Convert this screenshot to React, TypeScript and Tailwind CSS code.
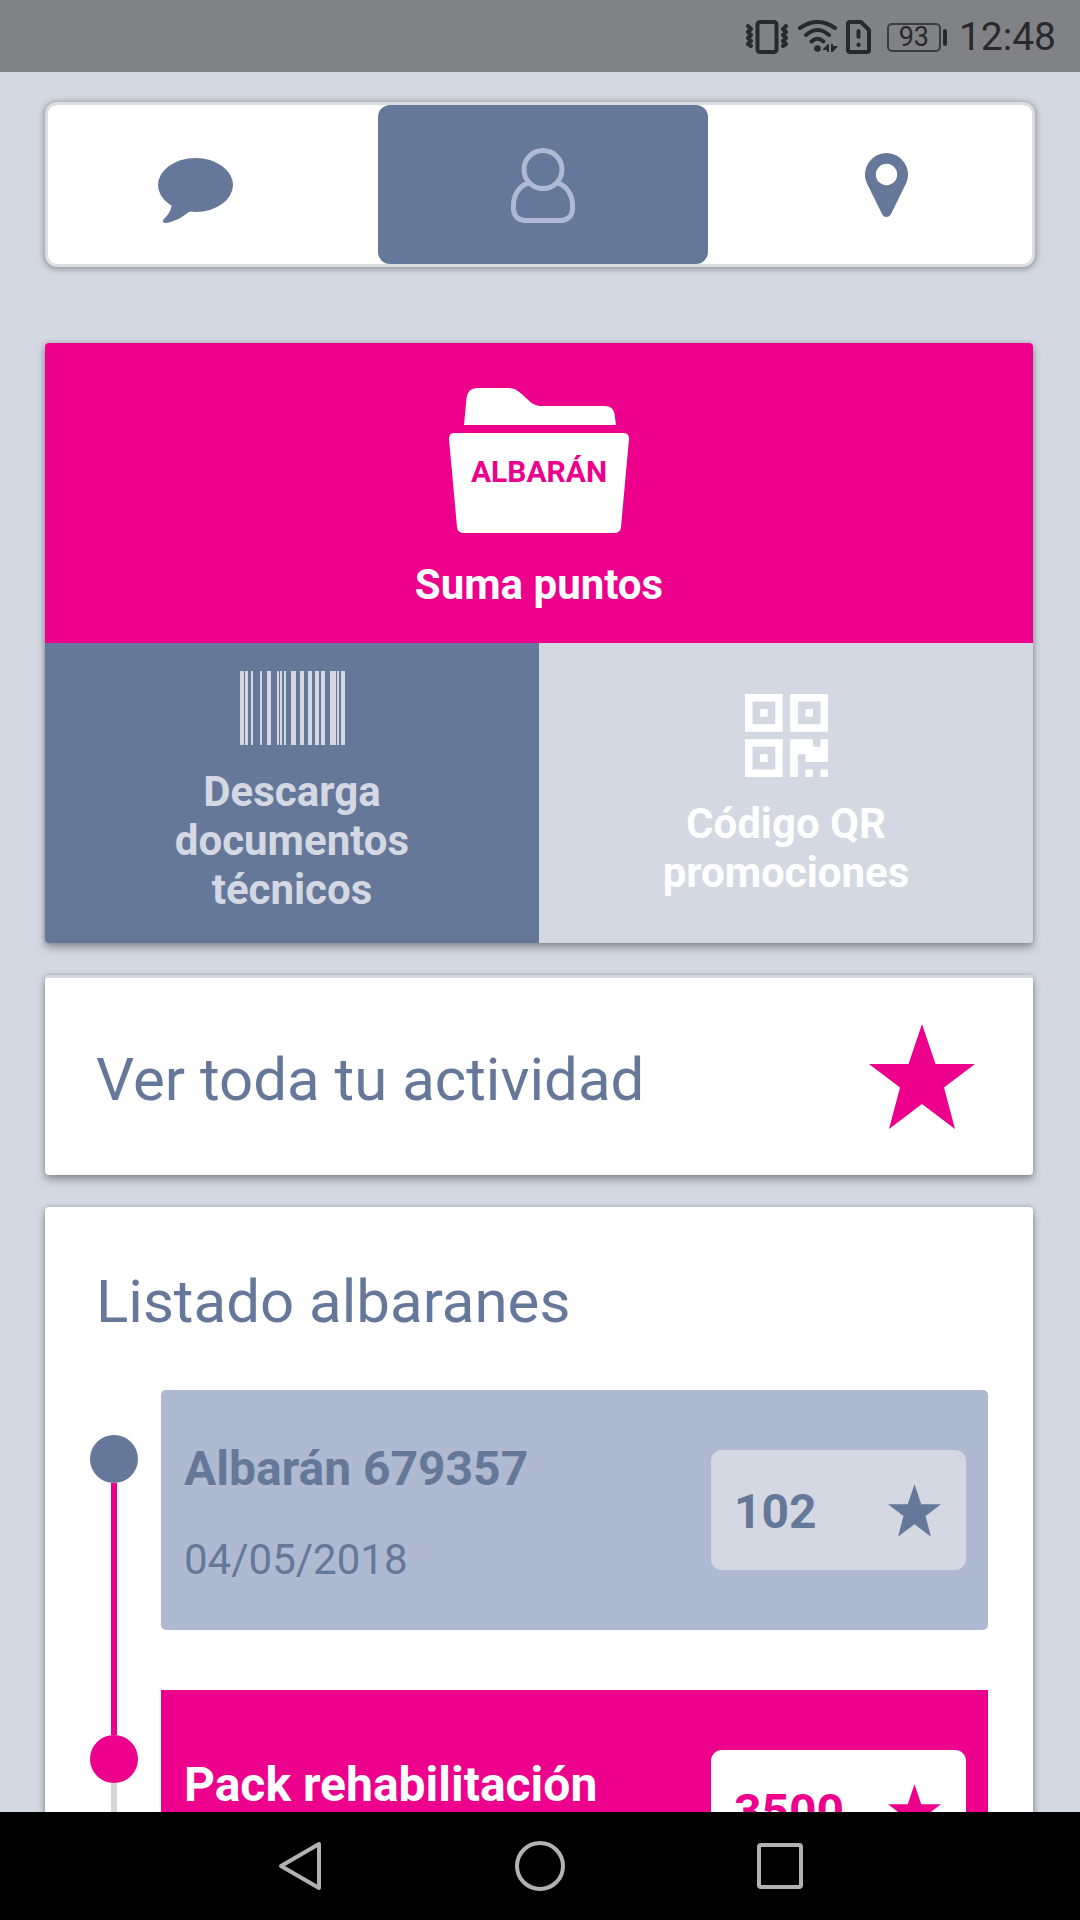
import type { ReactNode } from 'react'
import { clsx } from 'clsx'

const CARD = 'mr-0.5 rounded-[4px] shadow-[0_5px_8px_0_rgba(0,0,0,0.3),0_0_4px_1px_rgba(0,0,0,0.14)]'

const BARS = [
  [0, 4], [5, 3], [11, 2], [20, 2], [27, 4], [37, 2], [40, 2], [44, 2],
  [51, 5], [60, 4], [68, 4], [75, 4], [81, 4], [90, 6], [97, 2], [101, 4],
]

interface Albaran {
  title: string
  date?: string
  points: number
  highlighted?: boolean
}

const albaranes: Albaran[] = [
  { title: 'Albarán 679357', date: '04/05/2018', points: 102 },
  { title: 'Pack rehabilitación', points: 3500, highlighted: true },
]

function Star({ className }: { className: string }) {
  return (
    <svg viewBox="0 0 106 105" fill="currentColor" className={className} aria-hidden="true">
      <path d="M53 0 66.500 40H106L75 63.500 86 105 53 80 20 105 31 63.500 0 40H39.500Z" />
    </svg>
  )
}

function ChatIcon() {
  return (
    <svg viewBox="0 0 75 65" fill="currentColor" className="h-[65px] w-[75px]" aria-hidden="true">
      <ellipse cx="37.500" cy="27" rx="37.500" ry="27" />
      <path d="M14 46C13 53 10 57 6 61 4 63 5 65 8 65 16 64 25 59 32 53Z" />
    </svg>
  )
}

function PersonIcon() {
  return (
    <svg viewBox="0 0 64 75" fill="none" stroke="currentColor" strokeWidth="5" className="h-[75px] w-16" aria-hidden="true">
      <circle cx="32" cy="21.500" r="19" />
      <path d="M18 35C8 37 2.500 48 2.500 57V61C2.500 68 8 72.500 14 72.500H50C56 72.500 61.500 68 61.500 61V57C61.500 48 56 37 46 35" />
    </svg>
  )
}

function PinIcon() {
  return (
    <svg viewBox="0 0 43 64" fill="currentColor" className="h-16 w-[43px]" aria-hidden="true">
      <path
        fillRule="evenodd"
        d="M21.500 0A21.500 21.500 0 0 0 1.500 29.500L17 61Q18.500 64 21.500 64T26 61L41.500 29.500A21.500 21.500 0 0 0 21.500 0ZM21.500 10.800A10.700 10.700 0 1 1 21.500 32.200 10.700 10.700 0 0 1 21.500 10.800Z"
      />
    </svg>
  )
}

function FolderIcon() {
  return (
    <svg viewBox="0 0 180 145" fill="currentColor" className="h-[145px] w-[180px]" aria-hidden="true">
      <path d="M15 37 17.500 10Q19 0 28 0H59C67 0 72 5 77 10 83 16 87 18 93 18H156Q164 18 165.500 26L167 37Z" />
      <path d="M5 45H175Q180 45 180 51L172 139Q171.500 145 165 145H15Q8.500 145 8 139L0 51Q0 45 5 45Z" />
    </svg>
  )
}

function BarcodeIcon() {
  return (
    <svg viewBox="0 0 105 74" fill="currentColor" className="h-[74px] w-[105px]" aria-hidden="true">
      {BARS.map(([x, w]) => (
        <rect key={x} x={x} y="0" width={w} height="74" />
      ))}
    </svg>
  )
}

function QrIcon() {
  return (
    <svg viewBox="0 0 11 11" fill="currentColor" className="size-[83px]" aria-hidden="true">
      <path
        fillRule="evenodd"
        d="M0 0H5V5H0ZM1 1V4H4V1ZM2 2H3V3H2ZM6 0H11V5H6ZM7 1V4H10V1ZM8 2H9V3H8ZM0 6H5V11H0ZM1 7V10H4V7ZM2 8H3V9H2Z"
      />
      <path d="M6 6H9V7H10V6H11V9H8V8H7V11H6ZM8 10H9V11H8ZM10 10H11V11H10Z" />
    </svg>
  )
}

function StatusBar() {
  return (
    <header className="flex h-[72px] shrink-0 items-center justify-end bg-[#818286] pt-0.5 pr-6 text-[#28292c]">
      <svg viewBox="0 0 42 34" fill="none" stroke="currentColor" className="mr-2.5 h-[34px] w-[42px]" aria-hidden="true">
        <rect x="11.500" y="2" width="19" height="30" rx="2.500" strokeWidth="4" />
        <path strokeWidth="4" strokeLinejoin="round" strokeLinecap="round" d="M2 6 5 9 2 12 5 15 2 18 5 21 2 24 5 26M40 6 37 9 40 12 37 15 40 18 37 21 40 24 37 26" />
      </svg>
      <svg viewBox="0 0 40 34" fill="none" stroke="currentColor" strokeWidth="4" strokeLinecap="round" className="mr-2 h-[34px] w-10" aria-hidden="true">
        <path d="M2 8Q19.500-4 37 8M8 15Q19.500 5 31 15M13.500 21.500Q19.500 16 25.500 21.500" />
        <circle cx="19.500" cy="28.500" r="3.300" fill="currentColor" stroke="none" />
        <path fill="currentColor" stroke="none" d="M25 29 30 24H31V32H29V30H25ZM33 24H35V26H40L35 32H33Z" />
      </svg>
      <svg viewBox="0 0 25 34" fill="none" stroke="currentColor" strokeWidth="4" strokeLinejoin="round" className="mr-4 h-[34px] w-[25px]" aria-hidden="true">
        <path d="M4 2H15L23 10V30Q23 32 21 32H4Q2 32 2 30V4Q2 2 4 2Z" />
        <path strokeLinecap="round" strokeWidth="4" d="M12.500 11V17M12.500 24.500V25" />
      </svg>
      <div className="flex h-[29px] w-[54px] items-center justify-center rounded-[5px] border-2 border-[#3b3c3f] text-[27px]">93</div>
      <div className="mr-3 ml-0.5 h-[17px] w-1 rounded-sm bg-[#28292c]" />
      <time className="text-[39px]">12:48</time>
    </header>
  )
}

function Tabs() {
  return (
    <nav className="mt-[30px] grid h-[165px] grid-cols-[330fr_330fr_324fr] rounded-[12px] border-[3px] border-[#dcdde0] bg-white text-[#66789a] shadow-[0_1px_6px_1px_rgba(0,0,0,0.34)]">
      <button aria-label="Mensajes" className="flex items-center justify-center pt-3 pr-9">
        <ChatIcon />
      </button>
      <button aria-label="Perfil" aria-current="page" className="flex items-center justify-center rounded-[12px] bg-[#66789a] pt-0.5 text-[#afb9d5]">
        <PersonIcon />
      </button>
      <button aria-label="Tiendas" className="flex items-center justify-center pl-8">
        <PinIcon />
      </button>
    </nav>
  )
}

function Tile({ icon, className, children }: { icon: ReactNode; className: string; children: ReactNode }) {
  return (
    <button className={clsx('flex h-[300px] flex-col items-center justify-center text-[42px] leading-[49px] font-bold', className)}>
      {icon}
      <span>{children}</span>
    </button>
  )
}

function AlbaranItem({ title, date, points, highlighted }: Albaran) {
  return (
    <li className="flex">
      <div className={clsx('flex w-12 flex-col items-center', highlighted ? 'text-[#ed008c]' : 'text-[#66789a]')}>
        <div className={clsx('h-[45px] w-1.5', highlighted && 'bg-[#ed008c]')} />
        <div className="size-12 shrink-0 rounded-full bg-current" />
        <div className={clsx('w-1.5 flex-1', highlighted ? 'bg-[#d6d6d8]' : 'bg-[#ed008c]')} />
      </div>
      <div className="ml-[23px] flex-1 pb-[60px]">
        <article
          className={clsx(
            'flex h-60 items-start pr-[22px] pl-[23px]',
            highlighted ? 'bg-[#ed008c] text-white' : 'rounded-[5px] bg-[#afb9d1] text-[#66789a]',
          )}
        >
          <div className={clsx('flex flex-1 flex-col gap-[38px]', date ? 'pt-[51px]' : 'pt-[67px]')}>
            <h3 className="text-[48px] leading-[56px] font-bold">{title}</h3>
            {date && <p className="text-[42px] leading-[49px]">{date}</p>}
          </div>
          <div
            className={clsx(
              'mt-[60px] flex h-[120px] w-[255px] items-center justify-between rounded-[11px] pr-[25px] pl-[23px]',
              highlighted ? 'bg-white text-[#ed008c]' : 'bg-[#d4d8e2] text-[#66789a]',
            )}
          >
            <span className="pt-1 text-[48px] leading-[56px] font-bold">{points}</span>
            <Star className="size-[53px]" />
          </div>
        </article>
      </div>
    </li>
  )
}

function SystemNav() {
  return (
    <footer className="flex h-[108px] shrink-0 items-center justify-center bg-black text-[#b2b2b2]">
      <button aria-label="Atrás" className="flex w-60 justify-center">
        <svg viewBox="0 0 44 50" fill="none" stroke="currentColor" strokeWidth="4" strokeLinejoin="round" className="h-[50px] w-11" aria-hidden="true">
          <path d="M41 3V47L3 25Z" />
        </svg>
      </button>
      <button aria-label="Inicio" className="flex w-60 justify-center">
        <span className="size-[50px] rounded-full border-4 border-current" />
      </button>
      <button aria-label="Recientes" className="flex w-60 justify-center">
        <span className="size-[46px] rounded-[4px] border-4 border-current" />
      </button>
    </footer>
  )
}

function App() {
  return (
    <div className="flex h-screen flex-col bg-[#d4d8e2] font-[Roboto,sans-serif]">
      <StatusBar />

      <main className="min-h-0 flex-1 overflow-hidden px-[45px]">
        <Tabs />

        <section className={clsx('mt-[76px] grid grid-cols-2 overflow-hidden', CARD)}>
          <Tile
            className="col-span-2 gap-[27px] bg-[#ed008c] pt-[11px] text-white"
            icon={
              <span className="relative">
                <FolderIcon />
                <span className="absolute inset-x-0 top-[66px] text-center text-[30px] leading-[36px] text-[#ed008c]">ALBARÁN</span>
              </span>
            }
          >
            Suma puntos
          </Tile>
          <Tile className="gap-[22px] bg-[#66789a] pb-0.5 text-[#d4d8e2]" icon={<BarcodeIcon />}>
            Descarga
            <br />
            documentos
            <br />
            técnicos
          </Tile>
          <Tile className="gap-[22px] bg-[#d4d8e2] pt-1 text-white" icon={<QrIcon />}>
            Código QR
            <br />
            promociones
          </Tile>
        </section>

        <a
          href="#actividad"
          className={clsx('mt-8 flex h-[200px] items-center justify-between border-t-[3px] border-[#d4d8e2] bg-white pr-[58px] pl-[51px]', CARD)}
        >
          <span className="pt-1.5 text-[60px] leading-[70px] text-[#66789a]">Ver toda tu actividad</span>
          <Star className="h-[105px] w-[106px] text-[#ed008c]" />
        </a>

        <section className={clsx('mt-8 bg-white pt-[60px] pr-[45px] pl-[45px]', CARD)}>
          <h2 className="pl-1.5 text-[60px] leading-[70px] text-[#66789a]">Listado albaranes</h2>
          <ul className="mt-[53px]">
            {albaranes.map(item => (
              <AlbaranItem key={item.title} {...item} />
            ))}
          </ul>
        </section>
      </main>

      <SystemNav />
    </div>
  )
}

export default App
